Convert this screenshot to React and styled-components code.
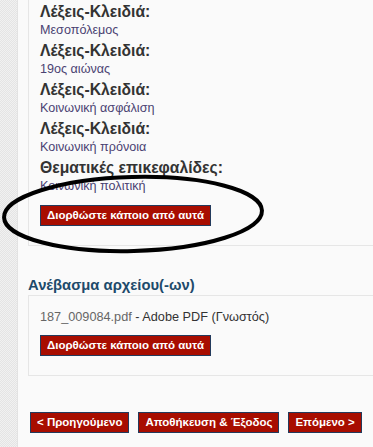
import React from 'react'
import styled, { createGlobalStyle } from 'styled-components'

const GlobalStyle = createGlobalStyle`
    html, body {
        margin: 0;
        padding: 0;
        background: #fafafa;
        font-family: "Liberation Sans", Arial, sans-serif;
        overflow: hidden;
    }
`

const Page = styled.div`
    position: relative;
    display: flex;
    width: 373px;
    height: 447px;
    overflow: hidden;
`

const Strip = styled.div`
    width: 17px;
    flex-shrink: 0;
    border-right: 1px solid #e2e2e2;
    background-color: #f1f1f1;
    background-image:
        linear-gradient(45deg, #e4e4e4 25%, transparent 25%, transparent 75%, #e4e4e4 75%),
        linear-gradient(45deg, #e4e4e4 25%, transparent 25%, transparent 75%, #e4e4e4 75%);
    background-size: 2px 2px;
    background-position: 0 0, 1px 1px;
`

const Main = styled.div`
    flex: 1;
    padding-left: 10px;
    min-width: 0;
`

const Panel = styled.div`
    display: flex;
    flex-direction: column;
    align-items: flex-start;
    border: 1px solid #e6e6e6;
    border-right: none;
    background: #fafafa;
    margin-top: ${p => p.$top || 0}px;
    padding: ${p => p.$pad};
`

const Label = styled.div`
    font-size: 15.7px;
    font-weight: bold;
    line-height: 20px;
    color: #333;
`

const Value = styled.div`
    font-size: 12.6px;
    line-height: 17px;
    color: #4a4272;
    margin-bottom: 2px;
`

const Heading = styled.h3`
    margin: 29px 0 0;
    font-size: 14.8px;
    font-weight: bold;
    line-height: 20px;
    color: #1d4a6b;
`

const FileLine = styled.div`
    font-size: 12.7px;
    line-height: 18px;
    color: #333;
`

const FileName = styled.span`
    color: #666;
`

const Button = styled.button`
    flex-shrink: 0;
    height: 21px;
    padding: 0 6px;
    margin-top: ${p => p.$top || 0}px;
    background: #a80d00;
    border: 1px solid #233a5c;
    color: #fff;
    font-family: "Liberation Sans", Arial, sans-serif;
    font-size: 11.5px;
    font-weight: bold;
    line-height: 19px;
    white-space: nowrap;
    cursor: pointer;
`

const NavRow = styled.div`
    display: flex;
    gap: 9px;
    margin: 36px 0 0 2px;
`

const Ellipse = styled.svg`
    position: absolute;
    left: 0;
    top: 170px;
    pointer-events: none;
`

const keywords = ['Μεσοπόλεμος', '19ος αιώνας', 'Κοινωνική ασφάλιση', 'Κοινωνική πρόνοια']

const App = () => {
    return (
        <Page>
            <GlobalStyle />
            <Strip />
            <Main>
                <Panel $top={-10} $pad="11px 0 19px 11px">
                    {keywords.map(k => (
                        <React.Fragment key={k}>
                            <Label>Λέξεις-Κλειδιά:</Label>
                            <Value>{k}</Value>
                        </React.Fragment>
                    ))}
                    <Label>Θεματικές επικεφαλίδες:</Label>
                    <Value>Κοινωνική πολιτική</Value>
                    <Button $top={8}>Διορθώστε κάποιο από αυτά</Button>
                </Panel>

                <Heading>Ανέβασμα αρχείου(-ων)</Heading>
                <Panel $pad="12px 0 19px 11px">
                    <FileLine><FileName>187_009084.pdf</FileName> - Adobe PDF (Γνωστός)</FileLine>
                    <Button $top={9}>Διορθώστε κάποιο από αυτά</Button>
                </Panel>

                <NavRow>
                    <Button>&lt; Προηγούμενο</Button>
                    <Button>Αποθήκευση &amp; Έξοδος</Button>
                    <Button>Επόμενο &gt;</Button>
                </NavRow>
            </Main>
            <Ellipse width="280" height="90" viewBox="0 0 280 90">
                <ellipse cx="133" cy="44" rx="129" ry="37" fill="none" stroke="#000" strokeWidth="4" transform="rotate(-1.5 133 44)" />
            </Ellipse>
        </Page>
    )
}

export default App
